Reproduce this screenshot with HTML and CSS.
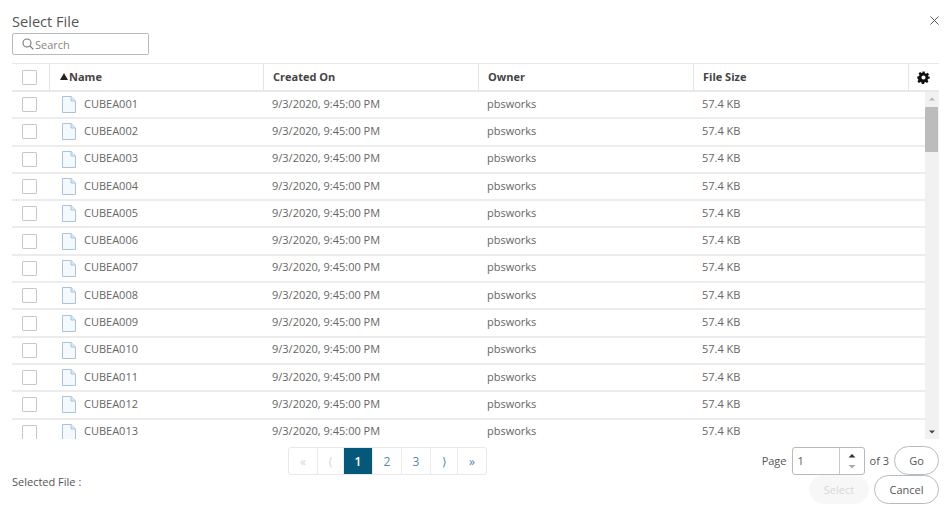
FILE: index.html
```html
<!DOCTYPE html>
<html lang="en">
<head>
<meta charset="utf-8">
<title>Select File</title>
<link rel="stylesheet" href="styles.css">
</head>
<body>
<svg class="defs" width="0" height="0" aria-hidden="true">
  <symbol id="file" viewBox="0 0 14 17">
    <path d="M.5.5h8.6l4.4 4.4v11.6H.5z" fill="#f4f9fd" stroke="#a9c4da"/>
    <path d="M9 .8v4.2h4.2" fill="#dce9f3" stroke="#a9c4da"/>
  </symbol>
</svg>
<main class="dialog">
  <header class="head">
    <h1 class="title">Select File</h1>
    <button class="close" aria-label="Close"><svg width="9" height="9" viewBox="0 0 10 10"><path d="M.5.5l9 9M9.500.5l-9 9" stroke="#555" stroke-width="1.100" fill="none"/></svg></button>
  </header>
  <div class="search">
    <svg width="12" height="12" viewBox="0 0 12 12"><circle cx="5" cy="5" r="4" fill="none" stroke="#777" stroke-width="1.1"/><path d="M8 8l3.300 3.300" stroke="#777" stroke-width="1.1"/></svg>
    <span>Search</span>
  </div>
  <div class="thead">
    <div class="c-check"><span class="box"></span></div>
    <div class="c-name th"><span class="arrow"></span>Name</div>
    <div class="c-col th">Created On</div>
    <div class="c-col th">Owner</div>
    <div class="c-col th th-size">File Size</div>
    <div class="c-gear"><svg width="13" height="13" viewBox="0 0 24 24"><path fill="#111" fill-rule="evenodd" d="M10 1h4l.7 3.200 1.900.8 2.800-1.800 2.800 2.800-1.800 2.800.8 1.900L23.400 10v4l-3.200.7-.8 1.900 1.800 2.800-2.800 2.800-2.800-1.800-1.900.8-.7 3.200h-4l-.7-3.200-1.900-.8-2.800 1.800-2.800-2.800 1.800-2.800-.8-1.900L.6 14v-4l3.200-.7.8-1.900L2.800 4.600l2.800-2.800 2.800 1.800 1.900-.8zM12 8.200a3.800 3.800 0 1 0 0 7.600 3.800 3.800 0 0 0 0-7.600z"/></svg></div>
  </div>
  <div class="tbody">
    <div class="rows">
      <div class="row"><div class="c-check"><span class="box"></span></div><div class="c-name"><svg class="ficon"><use href="#file"/></svg>CUBEA001</div><div class="c-col">9/3/2020, 9:45:00 PM</div><div class="c-col">pbsworks</div><div class="c-col">57.4 KB</div></div>
      <div class="row"><div class="c-check"><span class="box"></span></div><div class="c-name"><svg class="ficon"><use href="#file"/></svg>CUBEA002</div><div class="c-col">9/3/2020, 9:45:00 PM</div><div class="c-col">pbsworks</div><div class="c-col">57.4 KB</div></div>
      <div class="row"><div class="c-check"><span class="box"></span></div><div class="c-name"><svg class="ficon"><use href="#file"/></svg>CUBEA003</div><div class="c-col">9/3/2020, 9:45:00 PM</div><div class="c-col">pbsworks</div><div class="c-col">57.4 KB</div></div>
      <div class="row"><div class="c-check"><span class="box"></span></div><div class="c-name"><svg class="ficon"><use href="#file"/></svg>CUBEA004</div><div class="c-col">9/3/2020, 9:45:00 PM</div><div class="c-col">pbsworks</div><div class="c-col">57.4 KB</div></div>
      <div class="row"><div class="c-check"><span class="box"></span></div><div class="c-name"><svg class="ficon"><use href="#file"/></svg>CUBEA005</div><div class="c-col">9/3/2020, 9:45:00 PM</div><div class="c-col">pbsworks</div><div class="c-col">57.4 KB</div></div>
      <div class="row"><div class="c-check"><span class="box"></span></div><div class="c-name"><svg class="ficon"><use href="#file"/></svg>CUBEA006</div><div class="c-col">9/3/2020, 9:45:00 PM</div><div class="c-col">pbsworks</div><div class="c-col">57.4 KB</div></div>
      <div class="row"><div class="c-check"><span class="box"></span></div><div class="c-name"><svg class="ficon"><use href="#file"/></svg>CUBEA007</div><div class="c-col">9/3/2020, 9:45:00 PM</div><div class="c-col">pbsworks</div><div class="c-col">57.4 KB</div></div>
      <div class="row"><div class="c-check"><span class="box"></span></div><div class="c-name"><svg class="ficon"><use href="#file"/></svg>CUBEA008</div><div class="c-col">9/3/2020, 9:45:00 PM</div><div class="c-col">pbsworks</div><div class="c-col">57.4 KB</div></div>
      <div class="row"><div class="c-check"><span class="box"></span></div><div class="c-name"><svg class="ficon"><use href="#file"/></svg>CUBEA009</div><div class="c-col">9/3/2020, 9:45:00 PM</div><div class="c-col">pbsworks</div><div class="c-col">57.4 KB</div></div>
      <div class="row"><div class="c-check"><span class="box"></span></div><div class="c-name"><svg class="ficon"><use href="#file"/></svg>CUBEA010</div><div class="c-col">9/3/2020, 9:45:00 PM</div><div class="c-col">pbsworks</div><div class="c-col">57.4 KB</div></div>
      <div class="row"><div class="c-check"><span class="box"></span></div><div class="c-name"><svg class="ficon"><use href="#file"/></svg>CUBEA011</div><div class="c-col">9/3/2020, 9:45:00 PM</div><div class="c-col">pbsworks</div><div class="c-col">57.4 KB</div></div>
      <div class="row"><div class="c-check"><span class="box"></span></div><div class="c-name"><svg class="ficon"><use href="#file"/></svg>CUBEA012</div><div class="c-col">9/3/2020, 9:45:00 PM</div><div class="c-col">pbsworks</div><div class="c-col">57.4 KB</div></div>
      <div class="row"><div class="c-check"><span class="box"></span></div><div class="c-name"><svg class="ficon"><use href="#file"/></svg>CUBEA013</div><div class="c-col">9/3/2020, 9:45:00 PM</div><div class="c-col">pbsworks</div><div class="c-col">57.4 KB</div></div>
    </div>
    <div class="scrollbar">
      <svg class="sb-arrow" width="14" height="14" viewBox="0 0 14 14"><path d="M4 8.500h6L7 5.500z" fill="#b5b5b5"/></svg>
      <div class="sb-thumb"></div>
      <svg class="sb-arrow sb-down" width="14" height="14" viewBox="0 0 14 14"><path d="M4 5.500h6L7 8.500z" fill="#444"/></svg>
    </div>
  </div>
  <footer class="foot">
    <div class="selected">Selected File :</div>
    <nav class="pager">
      <span class="pg off">«</span><span class="pg off thin-a">⟨</span><span class="pg cur">1</span><span class="pg">2</span><span class="pg">3</span><span class="pg thin">⟩</span><span class="pg">»</span>
    </nav>
    <div class="right">
      <div class="goto">
        <span>Page</span>
        <div class="spin"><span class="spin-v">1</span><span class="spin-b"><svg width="10" height="18" viewBox="0 0 10 18"><path d="M1.500 5.500h7L5 2z" fill="#333"/><path d="M1.500 13h7L5 16.500z" fill="#aaa"/></svg></span></div>
        <span>of 3</span>
        <button class="btn go">Go</button>
      </div>
      <div class="actions">
        <button class="btn ghost">Select</button>
        <button class="btn cancel">Cancel</button>
      </div>
    </div>
  </footer>
</main>
</body>
</html>
```
FILE: styles.css
```css
* { box-sizing: border-box; }
html, body { margin: 0; height: 100%; background: #fff; }
body { font-family: "Open Sans", sans-serif; font-size: 11px; color: #666; overflow: hidden; }
.defs { position: absolute; }
.dialog { width: 950px; height: 515px; padding: 0 11px 0 12px; }
.head { height: 33px; display: flex; justify-content: space-between; align-items: flex-start; }
.title { margin: 12px 0 0; font-size: 14.6px; line-height: 19px; font-weight: 400; color: #555; }
.close { margin: 14px -1px 0 0; padding: 0; width: 12px; height: 12px; border: 0; background: none; display: flex; align-items: center; justify-content: center; }
.search { width: 137px; height: 22px; border: 1px solid #b4bcc2; border-radius: 2px; display: flex; align-items: center; gap: 1px; padding-left: 9px; color: #888; }
.thead { margin-top: 8px; height: 29px; display: flex; align-items: stretch; border-top: 1px solid #e8e8e8; border-bottom: 2px solid #e8e8e8; }
.th { font-weight: 700; color: #444; border-left: 1px solid #e4e4e4; padding-bottom: 1px; }
.th-size { padding-left: 8px; }
.arrow { width: 0; height: 0; margin-right: 1px; border-left: 4px solid transparent; border-right: 4px solid transparent; border-bottom: 7px solid #222; }
.c-check { width: 37px; flex: none; display: flex; align-items: center; justify-content: center; padding-right: 3px; }
.c-name { width: 214px; flex: none; display: flex; align-items: center; padding-left: 10px; }
.c-col { width: 215px; flex: none; display: flex; align-items: center; padding-left: 9px; }
.c-gear { flex: 1; border-left: 1px solid #e4e4e4; display: flex; align-items: center; justify-content: center; padding-right: 2px; }
.box { width: 15px; height: 15px; border: 1px solid #c3c8cc; border-radius: 1px; background: #fff; }
.tbody { height: 347px; display: flex; overflow: hidden; }
.rows { width: 913px; flex: none; margin-right: 0; }
.row { height: 27.3px; display: flex; align-items: stretch; border-bottom: 2px solid #ececec; }
.row .c-name { padding-left: 13px; padding-bottom: 3px; }
.row .c-col { color: #666; padding-bottom: 3px; }
.ficon { width: 14px; height: 17px; margin: 3px 8px 0 0; flex: none; }
.scrollbar { width: 14px; flex: none; background: #f1f1f1; display: flex; flex-direction: column; }
.sb-arrow { flex: none; display: block; }
.sb-thumb { height: 45px; margin: 1px 1px 0 0; background: #bcbcbc; }
.sb-down { margin-top: auto; }
.foot { display: flex; align-items: flex-start; }
.selected { width: 276px; flex: none; margin-top: 35px; color: #555; }
.pager { display: flex; height: 28px; margin-top: 8px; border: 1px solid #e8e8e8; border-radius: 3px; }
.pg { width: 29px; display: flex; align-items: center; justify-content: center; color: #4d87b8; font-size: 12px; border-left: 1px solid #ececec; }
.pg.thin { width: 27px; }
.pg.thin-a { width: 26px; }
.pg:first-child { border-left: 0; width: 28px; }
.pg.off { color: #d4d4d4; }
.pg.cur { background: #04587a; color: #fff; font-weight: 600; }
.right { margin-left: auto; display: flex; flex-direction: column; align-items: flex-end; margin-top: 7px; }
.goto { display: flex; align-items: center; gap: 5px; color: #555; }
.spin { width: 73px; height: 28px; border: 1px solid #b4bcc2; border-radius: 3px; display: flex; }
.spin-v { flex: 1; padding-left: 5px; display: flex; align-items: center; }
.spin-b { width: 25px; border-left: 1px solid #c8c8c8; display: flex; align-items: center; justify-content: center; }
.btn { font: inherit; height: 29px; border-radius: 15px; background: #fff; border: 1px solid #b4bcc2; color: #555; padding: 0; }
.go { width: 45px; }
.actions { display: flex; gap: 5px; }
.ghost { width: 60px; border-color: #f7f7f7; background: #f7f7f7; color: #d8d8d8; }
.cancel { width: 65px; }
```
